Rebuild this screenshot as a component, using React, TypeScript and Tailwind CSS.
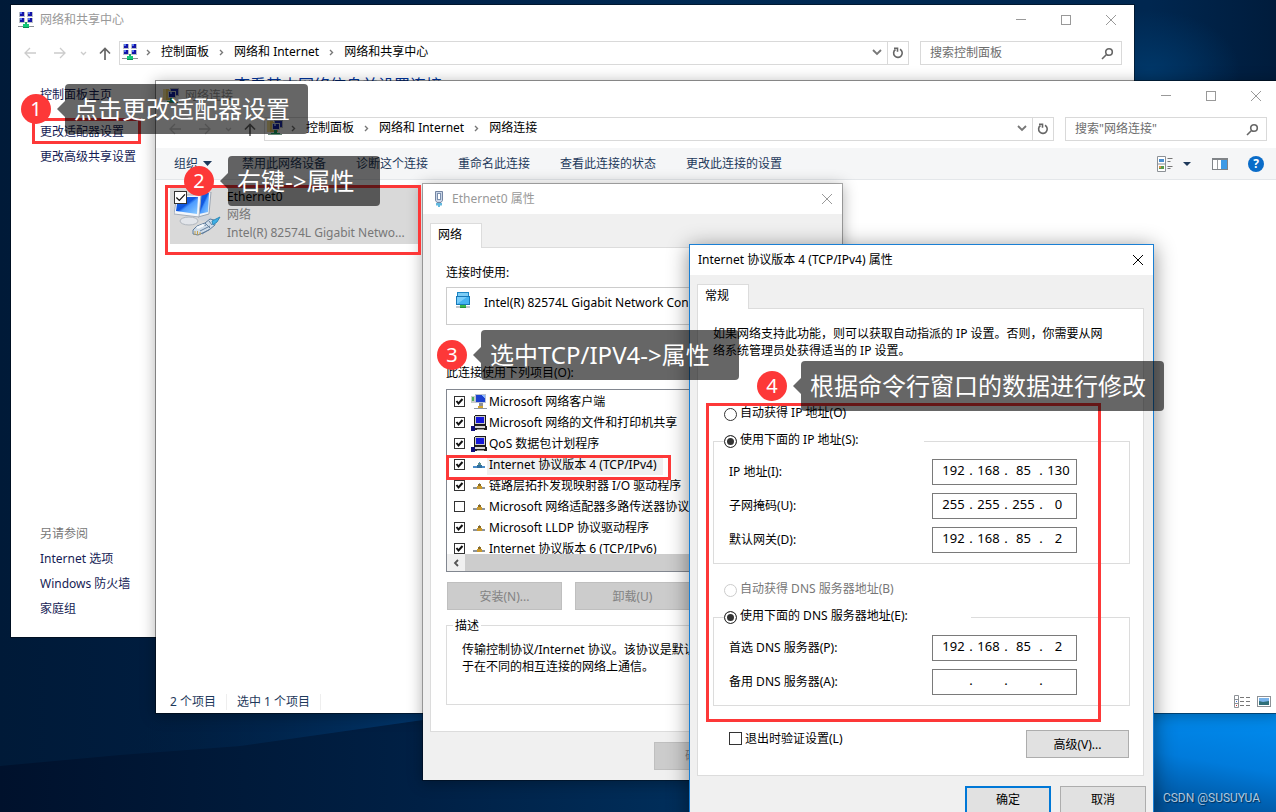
import type { ReactNode } from "react";
import clsx from "clsx";

const sidebarLinks = ["更改适配器设置", "更改高级共享设置"];
const seeAlsoLinks = ["Internet 选项", "Windows 防火墙", "家庭组"];
const toolbarActions = ["禁用此网络设备", "诊断这个连接", "重命名此连接", "查看此连接的状态", "更改此连接的设置"];

type ItemIcon = "client" | "service" | "protocol";

const connectionItems: { label: string; icon: ItemIcon; checked: boolean; selected?: boolean }[] = [
  { label: "Microsoft 网络客户端", icon: "client", checked: true },
  { label: "Microsoft 网络的文件和打印机共享", icon: "service", checked: true },
  { label: "QoS 数据包计划程序", icon: "service", checked: true },
  { label: "Internet 协议版本 4 (TCP/IPv4)", icon: "protocol", checked: true, selected: true },
  { label: "链路层拓扑发现映射器 I/O 驱动程序", icon: "protocol", checked: true },
  { label: "Microsoft 网络适配器多路传送器协议", icon: "protocol", checked: false },
  { label: "Microsoft LLDP 协议驱动程序", icon: "protocol", checked: true },
  { label: "Internet 协议版本 6 (TCP/IPv6)", icon: "protocol", checked: true },
];

const Wallpaper = () => (
  <svg className="absolute inset-0 h-full w-full" viewBox="0 0 1276 812" preserveAspectRatio="none" aria-hidden="true">
    <defs>
      <linearGradient id="sky" x1="0" y1="0" x2="1" y2="0">
        <stop offset="0" stopColor="#001a38" />
        <stop offset="0.3" stopColor="#002148" />
        <stop offset="0.55" stopColor="#002a54" />
        <stop offset="0.9" stopColor="#002750" />
        <stop offset="1" stopColor="#001c3c" />
      </linearGradient>
      <linearGradient id="floor" x1="0" y1="0" x2="1" y2="0">
        <stop offset="0" stopColor="#00112c" />
        <stop offset="0.35" stopColor="#001a3a" />
        <stop offset="0.6" stopColor="#002045" />
        <stop offset="1" stopColor="#002f5c" />
      </linearGradient>
      <linearGradient id="beam" x1="0" y1="0" x2="1" y2="0">
        <stop offset="0" stopColor="#001d3c" stopOpacity="0" />
        <stop offset="1" stopColor="#00386f" />
      </linearGradient>
      <linearGradient id="glow" x1="0.7" y1="0" x2="0.5" y2="1">
        <stop offset="0" stopColor="#0092f6" />
        <stop offset="0.6" stopColor="#007bdb" />
        <stop offset="1" stopColor="#00539c" />
      </linearGradient>
      <radialGradient id="spot" cx="0.5" cy="0.5" r="0.5">
        <stop offset="0" stopColor="#003768" />
        <stop offset="1" stopColor="#003768" stopOpacity="0" />
      </radialGradient>
    </defs>
    <rect width="1276" height="812" fill="url(#sky)" />
    <polygon points="0,766 120,755 240,746 430,719 700,680 700,812 0,812" fill="url(#floor)" />
    <polygon points="160,713 430,713 430,719 240,746 120,755" fill="url(#beam)" />
    <ellipse cx="1150" cy="70" rx="90" ry="60" fill="url(#spot)" />
    <rect x="1140" y="690" width="136" height="122" fill="url(#glow)" />
  </svg>
);

const NetworkCenterIcon = () => (
  <svg width="16" height="16" viewBox="0 0 16 16" shapeRendering="crispEdges" aria-hidden="true">
    {[
      [1, 0],
      [9, 0],
      [1, 6],
      [9, 6],
    ].map(([x, y]) => (
      <g key={`${x}-${y}`}>
        <rect x={x} y={y} width="6" height="5" fill="#b9bec8" />
        <rect x={x + 1} y={y} width="4" height="4" fill="#1414a8" />
        <rect x={x + 1} y={y} width="2" height="2" fill="#5a78f0" />
      </g>
    ))}
    <rect x="7" y="10" width="2" height="3" fill="#1fa968" />
    <rect x="5" y="12" width="6" height="3" fill="#14c878" />
    <rect x="0" y="14" width="5" height="1" fill="#8a9096" />
    <rect x="11" y="14" width="5" height="1" fill="#8a9096" />
    <rect x="5" y="15" width="6" height="1" fill="#0a8a52" />
  </svg>
);

const ConnectionsFolderIcon = () => (
  <svg width="16" height="16" viewBox="0 0 16 16" shapeRendering="crispEdges" aria-hidden="true">
    <path d="M0 1h5l1 1h5v10H0z" fill="#e8c860" />
    <path d="M0 1h3v11H0z" fill="#f8e49a" />
    <rect x="7" y="0" width="9" height="8" fill="#b4bac4" />
    <rect x="8" y="1" width="7" height="6" fill="#1c2cb0" />
    <rect x="5" y="3" width="8" height="7" fill="#d0d5dc" />
    <rect x="6" y="4" width="6" height="5" fill="#1020a8" />
    <rect x="7" y="4" width="2" height="2" fill="#7a96f4" />
    <rect x="7" y="10" width="3" height="3" fill="#1fa968" />
    <rect x="4" y="13" width="9" height="2" fill="#14b870" />
    <rect x="1" y="14" width="14" height="1" fill="#6a8878" />
  </svg>
);

const PlugIcon = () => (
  <svg width="10" height="16" viewBox="0 0 10 16" aria-hidden="true">
    <path d="M1.500 .5h7v9l-1.500 2H3l-1.500-2z" fill="#c9d5e6" stroke="#7485a2" />
    <rect x="3.500" y="2.500" width="3" height="6" fill="#fff" stroke="#7b8fae" />
    <path d="M3 12v2.500M5 12v4M7 12v2.500" stroke="#1f9bd1" strokeWidth="1.400" />
  </svg>
);

const AdapterIcon = () => (
  <svg width="16" height="16" viewBox="0 0 16 16" aria-hidden="true">
    <rect x="2.500" y=".5" width="11" height="5" fill="#7ccdf6" stroke="#1c86c4" />
    <rect x="1.500" y="4.500" width="13" height="8" fill="#45b4f2" stroke="#1779b8" />
    <path d="M2 12V5h10z" fill="#79cdfa" />
    <path d="M5 13h6v2H5z" fill="#38b54a" />
    <path d="M1 15h4M11 15h4" stroke="#c3c8cc" strokeWidth="2" />
    <path d="M5 15.500h6" stroke="#27933a" />
  </svg>
);

const EthernetIcon = () => (
  <svg className="mt-1 ml-1" width="48" height="46" viewBox="0 0 48 46" aria-hidden="true">
    <defs>
      <linearGradient id="screen" x1="0" y1="0" x2="1" y2="1">
        <stop offset="0" stopColor="#1b62e2" />
        <stop offset="0.45" stopColor="#0f56df" />
        <stop offset="0.55" stopColor="#4c9bff" />
        <stop offset="1" stopColor="#8fcdff" />
      </linearGradient>
    </defs>
    <ellipse cx="31" cy="26" rx="7" ry="3" fill="#cfd4db" />
    <path d="M19 0h18l-2 22-11 3z" fill="#edf2f8" stroke="#9ba5b2" />
    <path d="M25 1h10l-1 19-9 2z" fill="url(#screen)" />
    <path d="M3 3h24l-2 22L0 22z" fill="#f3f6fa" stroke="#a5aebb" />
    <path d="M4 5h20l-1 17L2 19z" fill="url(#screen)" />
    <path d="M10 25h7l1 4h-8z" fill="#b0b6be" />
    <ellipse cx="15" cy="29" rx="9" ry="4" fill="#e2e5ea" stroke="#b0b6be" />
    <path d="M19 38l4-4 8-3 5-4 4 1 1 5-6 5-11 5-5-1z" fill="#cfdce9" stroke="#5f7c9c" />
    <path d="M24 36l8-3M26 39l10-5M28 42l8-5M31 31l5 5M35 29l3 4" stroke="#64819f" />
    <path d="M22 35l7-3 2 2-7 3z" fill="#f4f8fc" />
    <path d="M38 29l8-4-3 5-4 3z" fill="#3dafe6" stroke="#2f8ab8" />
    <path d="M21 39v4M23.500 39v4M26 40v3" stroke="#c9a24a" />
  </svg>
);

const ItemGlyph = ({ icon, active }: { icon: ItemIcon; active?: boolean }) => {
  if (icon === "client") {
    return (
      <svg width="16" height="16" viewBox="0 0 16 16" shapeRendering="crispEdges" aria-hidden="true">
        <rect x="0" y="2" width="4" height="7" fill="#c9cec8" />
        <rect x="1" y="3" width="2" height="4" fill="#4fae5c" />
        <rect x="4" y="0" width="11" height="9" fill="#b9c2d0" />
        <rect x="5" y="1" width="9" height="7" fill="#1c40cf" />
        <path d="M10 1h4v4z" fill="#8ab6ff" />
        <rect x="8" y="9" width="4" height="3" fill="#8b8f99" />
        <rect x="7" y="12" width="5" height="3" fill="#d2a52e" />
        <rect x="3" y="14" width="13" height="1" fill="#8d96a0" />
      </svg>
    );
  }
  if (icon === "service") {
    return (
      <svg width="16" height="16" viewBox="0 0 16 16" shapeRendering="crispEdges" aria-hidden="true">
        <path d="M4 0h10l1 1v9H3V1z" fill="#1a1a1a" />
        <rect x="4" y="1" width="10" height="8" fill="#c8c8c8" />
        <rect x="5" y="2" width="8" height="6" fill="#1518d8" />
        <path d="M3 10h11l2 2v3H4z" fill="#222" />
        <rect x="4" y="11" width="10" height="2" fill="#d8d8d8" />
        <rect x="6" y="14" width="7" height="1" fill="#9a9a9a" />
        <path d="M0 11h4v5H0z" fill="#10107c" />
      </svg>
    );
  }
  const base = active ? "#4a8cc8" : "#8d9399";
  return (
    <svg width="16" height="16" viewBox="0 0 16 16" shapeRendering="crispEdges" aria-hidden="true">
      <rect x="2" y="9" width="12" height="2" fill={base} />
      <rect x="6" y="8" width="5" height="3" fill={active ? "#2f6f9f" : "#c9982a"} />
      <rect x="7" y="6" width="3" height="2" fill={active ? "#5f8f8a" : "#8a6b22"} />
      <rect x="8" y="5" width="1" height="1" fill={base} />
    </svg>
  );
};

const CloseGlyph = () => (
  <svg width="12" height="12" viewBox="0 0 12 12" fill="none" stroke="currentColor" aria-hidden="true">
    <path d="M1 1l10 10M11 1L1 11" />
  </svg>
);

const Crumb = () => (
  <svg className="mr-2.5 ml-2 shrink-0" width="5" height="7" viewBox="0 0 5 7" fill="none" stroke="#777" strokeWidth="1.400" aria-hidden="true">
    <path d="M1 1l2.500 2.500L1 6" />
  </svg>
);

const CaptionButtons = () => (
  <div className="ml-auto flex h-full text-[#999]">
    <button type="button" aria-label="最小化" className="grid w-[45px] place-items-center">
      <span className="h-px w-2.5 bg-current" />
    </button>
    <button type="button" aria-label="最大化" className="grid w-[45px] place-items-center">
      <span className="size-2.5 border border-current" />
    </button>
    <button type="button" aria-label="关闭" className="grid w-[45px] place-items-center">
      <CloseGlyph />
    </button>
  </div>
);

type ExplorerWindowProps = {
  title: string;
  icon: ReactNode;
  path: string[];
  placeholder: string;
  className: string;
  children: ReactNode;
};

const ExplorerWindow = ({ title, icon, path, placeholder, className, children }: ExplorerWindowProps) => (
  <section className={clsx("absolute flex h-[634px] w-[1125px] flex-col border bg-white bg-clip-padding", className)}>
    <header className="flex h-[30px] shrink-0 items-center gap-1.5 pr-px pb-px pl-[7px] text-[#999]">
      {icon}
      <h1>{title}</h1>
      <CaptionButtons />
    </header>
    <div className="mt-1.5 flex h-6 shrink-0 items-stretch pr-3 pl-1">
      <button type="button" aria-label="后退" className="grid w-[30px] place-items-center text-[#ccc]">
        <svg width="12" height="12" viewBox="0 0 12 12" fill="none" stroke="currentColor" strokeWidth="1.300">
          <path d="M12 6H1M6 1L1 6l5 5" />
        </svg>
      </button>
      <button type="button" aria-label="前进" className="grid w-[30px] place-items-center text-[#ccc]">
        <svg width="12" height="12" viewBox="0 0 12 12" fill="none" stroke="currentColor" strokeWidth="1.300">
          <path d="M0 6h11M6 1l5 5-5 5" />
        </svg>
      </button>
      <button type="button" aria-label="最近浏览的位置" className="grid w-4 place-items-center text-[#ccc]">
        <svg width="7" height="5" viewBox="0 0 7 5" fill="none" stroke="currentColor" strokeWidth="1.300">
          <path d="M1 1l2.500 2.500L6 1" />
        </svg>
      </button>
      <button type="button" aria-label="向上" className="grid w-7 place-items-center text-[#666]">
        <svg width="12" height="13" viewBox="0 0 12 13" fill="none" stroke="currentColor" strokeWidth="1.700">
          <path d="M6 13V1.500M1 6.500l5-5 5 5" />
        </svg>
      </button>
      <nav className="flex flex-1 items-center border border-[#d9d9d9] pb-0.5 pl-0.5">
        {icon}
        {path.map((part) => (
          <span key={part} className="flex items-center">
            <Crumb />
            <a href="#" className="pr-0.5">
              {part}
            </a>
          </span>
        ))}
        <button type="button" aria-label="展开" className="ml-auto grid h-full w-5 place-items-center text-[#777]">
          <svg width="10" height="7" viewBox="0 0 10 7" fill="none" stroke="currentColor" strokeWidth="1.800">
            <path d="M1 1l4 4 4-4" />
          </svg>
        </button>
      </nav>
      <button type="button" aria-label="刷新" className="grid w-[21px] place-items-center border border-l-0 border-[#d9d9d9] text-[#666]">
        <svg width="12" height="12" viewBox="0 0 12 12" fill="none" stroke="currentColor" strokeWidth="1.600">
          <path d="M8 2.300A4.300 4.300 0 1 1 3.500 2.500" />
          <path d="M2 1.200h3.500v3.500" />
        </svg>
      </button>
      <label className="ml-[11px] flex w-[202px] items-center border border-[#d9d9d9] pr-[7px] pl-[9px]">
        <input
          type="text"
          aria-label={placeholder}
          placeholder={placeholder}
          className="min-w-0 flex-1 outline-none placeholder:text-[#6d6d6d]"
        />
        <svg width="13" height="13" viewBox="0 0 13 13" fill="none" stroke="#666" strokeWidth="1.600" aria-hidden="true">
          <circle cx="8" cy="5" r="3.300" />
          <path d="M5.500 7.500L1 12" />
        </svg>
      </label>
    </div>
    {children}
  </section>
);

type DialogProps = {
  title: string;
  tab: string;
  icon?: ReactNode;
  active?: boolean;
  className: string;
  children: ReactNode;
};

const PropertyDialog = ({ title, tab, icon, active, className, children }: DialogProps) => (
  <section className={clsx("absolute border bg-[#f0f0f0] bg-clip-padding text-black", className)}>
    <header className={clsx("flex h-[30px] items-center bg-white pl-2", active ? "text-black" : "text-[#999]")}>
      {icon}
      <h2>{title}</h2>
      <button type="button" aria-label="关闭" className="ml-auto grid h-full w-[30px] place-items-center">
        <CloseGlyph />
      </button>
    </header>
    <div className="px-[7px] pt-[9px] pb-2.5">
      <button
        type="button"
        role="tab"
        aria-selected="true"
        className="relative -mb-px block h-[25px] w-[52px] border border-b-0 border-[#dcdcdc] bg-white pb-0.5 pl-[7px] text-left"
      >
        {tab}
      </button>
      {children}
    </div>
  </section>
);

const Check = ({ checked, label, large }: { checked: boolean; label: string; large?: boolean }) => (
  <span className={clsx("relative grid shrink-0", large ? "size-[13px]" : "size-[11px]")}>
    <input
      type="checkbox"
      defaultChecked={checked}
      aria-label={label}
      className="peer size-full appearance-none border border-[#333] bg-white"
    />
    <svg
      className="pointer-events-none absolute inset-0 hidden size-full peer-checked:block"
      viewBox="0 0 11 11"
      fill="none"
      stroke="#111"
      strokeWidth={large ? 1 : 2}
      aria-hidden="true"
    >
      <path d={large ? "M2 5.500l2.500 2.500L9.300 2.800" : "M2.500 5l2 2.500L8.500 3"} />
    </svg>
  </span>
);

const Radio = ({ name, label, checked, disabled }: { name: string; label: string; checked?: boolean; disabled?: boolean }) => (
  <label className={clsx("flex h-[18px] items-center gap-[3px]", disabled && "text-[#777]")}>
    <input
      type="radio"
      name={name}
      defaultChecked={checked}
      disabled={disabled}
      className="size-[13px] shrink-0 appearance-none rounded-full border border-[#333] bg-white checked:bg-[#333] checked:shadow-[inset_0_0_0_2px_white] disabled:border-[#ccc]"
    />
    <span className="pb-[3px]">{label}</span>
  </label>
);

const AddressField = ({ id, label, octets }: { id: string; label: string; octets: string[] }) => (
  <div className="flex h-[26px] items-center justify-between">
    <label htmlFor={id} className="pb-0.5">
      {label}
    </label>
    <div className="flex h-full w-[145px] items-center border border-[#7a7a7a] bg-white pb-[3px] pl-[5px] text-[13px]">
      {octets.map((octet, i) => (
        <span key={i} className="flex items-center">
          {i > 0 && <span className="w-1 text-center">.</span>}
          <input
            id={i === 0 ? id : undefined}
            aria-label={i === 0 ? undefined : `${label} ${i + 1}`}
            type="text"
            defaultValue={octet}
            className="w-[31px] text-center outline-none"
          />
        </span>
      ))}
    </div>
  </div>
);

const DialogButton = ({ children, className }: { children: ReactNode; className: string }) => (
  <button type="button" className={clsx("h-7 border", className)}>
    {children}
  </button>
);

const EthernetDialog = () => (
  <PropertyDialog
    title="Ethernet0 属性"
    tab="网络"
    icon={
      <span className="mr-2 ml-[3px]">
        <PlugIcon />
      </span>
    }
    className="top-[183px] left-[422px] w-[421px] border-black/30 shadow-[0_2px_14px_rgba(0,0,0,0.3)]"
  >
    <div className="mr-0.5 border border-[#dcdcdc] bg-white pt-4 pr-3.5 pb-[26px] pl-[15px] leading-[17px]">
      <p>连接时使用:</p>
      <div className="mt-1.5 flex h-[38px] gap-3 border border-[#ccc] pt-1 pl-2">
        <AdapterIcon />
        <span className="pt-0.5 pl-px whitespace-nowrap">Intel(R) 82574L Gigabit Network Con</span>
      </div>
      <p className="mt-[39px]">此连接使用下列项目(O):</p>
      <div className="mt-2 border border-[#828790]">
        <ul className="h-[164px] overflow-hidden pt-px">
          {connectionItems.map((item) => (
            <li key={item.label} className="flex h-[21px] items-center pl-[7px] whitespace-nowrap">
              <Check checked={item.checked} label={item.label} />
              <span className="ml-1.5">
                <ItemGlyph icon={item.icon} active={item.selected} />
              </span>
              <span className={clsx("px-0.5 leading-5", item.selected && "bg-[#f0f0f0] pr-1.5")}>{item.label}</span>
            </li>
          ))}
        </ul>
        <div className="flex h-[17px] bg-[#cdcdcd]">
          <button type="button" aria-label="向左滚动" className="grid w-[18px] place-items-center bg-[#f0f0f0] text-[#555]">
            <svg width="6" height="8" viewBox="0 0 6 8" fill="none" stroke="currentColor" strokeWidth="1.800">
              <path d="M5 1L2 4l3 3" />
            </svg>
          </button>
        </div>
      </div>
      <div className="mt-2.5 flex gap-[13px] pl-px">
        <DialogButton className="w-[115px] border-[#bfbfbf] bg-[#ccc] text-[#838383]">安装(N)...</DialogButton>
        <DialogButton className="w-[115px] border-[#bfbfbf] bg-[#ccc] text-[#838383]">卸载(U)</DialogButton>
      </div>
      <fieldset className="mt-[7px] border border-[#dcdcdc] px-1.5 pb-[29px]">
        <legend className="px-0.5">描述</legend>
        <p className="pt-[7px] pl-[9px] whitespace-nowrap">
          传输控制协议/Internet 协议。该协议是默认
          <br />
          于在不同的相互连接的网络上通信。
        </p>
      </fieldset>
    </div>
    <div className="mt-2.5 flex justify-end pr-[95px]">
      <DialogButton className="w-[86px] border-[#bfbfbf] bg-[#ccc] text-[#838383]">确定</DialogButton>
    </div>
  </PropertyDialog>
);

const Ipv4Dialog = () => (
  <PropertyDialog
    title="Internet 协议版本 4 (TCP/IPv4) 属性"
    tab="常规"
    active
    className="top-[244px] left-[689px] w-[465px] border-[#1a7fd4] shadow-[0_3px_20px_rgba(0,0,0,0.45)]"
  >
    <div className="mr-0.5 border border-[#dcdcdc] bg-white pt-4 pr-[13px] pb-[17px] pl-[15px] leading-[17px]">
      <p className="pr-5">
        如果网络支持此功能，则可以获取自动指派的 IP 设置。否则，你需要从网络系统管理员处获得适当的 IP 设置。
      </p>
      <div className="mt-[46px] pl-[11px]">
        <Radio name="ip" label="自动获得 IP 地址(O)" />
      </div>
      <fieldset className="mt-[9px] border border-[#dcdcdc] px-2.5 pb-2.5">
        <legend className="w-[200px]">
          <Radio name="ip" label="使用下面的 IP 地址(S):" checked />
        </legend>
        <div className="flex flex-col gap-2 pt-[9px] pr-[42px] pl-[5px]">
          <AddressField id="ip-address" label="IP 地址(I):" octets={["192", "168", "85", "130"]} />
          <AddressField id="subnet-mask" label="子网掩码(U):" octets={["255", "255", "255", "0"]} />
          <AddressField id="gateway" label="默认网关(D):" octets={["192", "168", "85", "2"]} />
        </div>
      </fieldset>
      <div className="mt-[17px] pl-[11px]">
        <Radio name="dns" label="自动获得 DNS 服务器地址(B)" disabled />
      </div>
      <fieldset className="mt-[9px] border border-[#dcdcdc] px-2.5 pb-2.5">
        <legend className="w-[247px]">
          <Radio name="dns" label="使用下面的 DNS 服务器地址(E):" checked />
        </legend>
        <div className="flex flex-col gap-2 pt-[9px] pr-[42px] pl-[5px]">
          <AddressField id="dns-primary" label="首选 DNS 服务器(P):" octets={["192", "168", "85", "2"]} />
          <AddressField id="dns-secondary" label="备用 DNS 服务器(A):" octets={["", "", "", ""]} />
        </div>
      </fieldset>
      <div className="mt-6 flex items-start justify-between pr-px pl-4">
        <label className="flex h-4 items-center gap-[3px]">
          <Check checked={false} label="退出时验证设置(L)" large />
          退出时验证设置(L)
        </label>
        <DialogButton className="w-[103px] border-[#adadad] bg-[#e1e1e1]">高级(V)...</DialogButton>
      </div>
    </div>
    <div className="mt-2.5 flex justify-end gap-[9px]">
      <DialogButton className="w-[86px] border-2 border-[#0078d7] bg-[#e1e1e1]">确定</DialogButton>
      <DialogButton className="w-[86px] border-[#adadad] bg-[#e1e1e1]">取消</DialogButton>
    </div>
  </PropertyDialog>
);

const Callout = ({ step, text, className, bubble }: { step: number; text: string; className: string; bubble: string }) => (
  <div className={clsx("absolute flex items-center whitespace-nowrap text-white", className)}>
    <span className="grid size-[30px] place-items-center rounded-full bg-[#fd3838] text-xl leading-none">{step}</span>
    <svg className="ml-1.5" width="8" height="16" viewBox="0 0 8 16" fill="#000" fillOpacity="0.6" aria-hidden="true">
      <path d="M8 0v16L0 8z" />
    </svg>
    <span className={clsx("h-[50px] rounded bg-black/60 pr-[17px] pl-[9px] text-2xl leading-[50px]", bubble)}>{text}</span>
  </div>
);

const Highlight = ({ className }: { className: string }) => (
  <div className={clsx("pointer-events-none absolute border-3 border-[#fd3838]", className)} />
);

export default function App() {
  return (
    <main className="relative min-h-screen overflow-hidden bg-[#001a38] font-['Noto_Sans','Noto_Sans_CJK_SC',sans-serif] text-xs text-black">
      <Wallpaper />

      <ExplorerWindow
        title="网络和共享中心"
        icon={<NetworkCenterIcon />}
        path={["控制面板", "网络和 Internet", "网络和共享中心"]}
        placeholder="搜索控制面板"
        className="top-1 left-[10px] border-black/40"
      >
        <div className="flex flex-1 gap-[50px] pl-[29px] leading-[17px]">
          <aside className="flex w-[144px] flex-col pt-[21px] pb-5 text-[#151c55]">
            <a href="#">控制面板主页</a>
            <ul className="mt-5 flex flex-col gap-2">
              {sidebarLinks.map((link) => (
                <li key={link}>
                  <a href="#">{link}</a>
                </li>
              ))}
            </ul>
            <ul className="mt-auto flex flex-col gap-2">
              <li className="text-[#777]">另请参阅</li>
              {seeAlsoLinks.map((link) => (
                <li key={link}>
                  <a href="#">{link}</a>
                </li>
              ))}
            </ul>
          </aside>
          <h2 className="pt-2.5 text-base leading-5 text-[#003399]">查看基本网络信息并设置连接</h2>
        </div>
      </ExplorerWindow>

      <ExplorerWindow
        title="网络连接"
        icon={<ConnectionsFolderIcon />}
        path={["控制面板", "网络和 Internet", "网络连接"]}
        placeholder={'搜索"网络连接"'}
        className="top-20 left-[155px] border-black/40 shadow-[0_2px_14px_rgba(0,0,0,0.3)]"
      >
        <div className="mt-[7px] flex h-8 shrink-0 items-center gap-[30px] border-b border-[#e4e7ea] bg-[#f5f6f7] pr-3 pl-[18px] text-[#1e395b]">
          <button type="button" className="flex items-center gap-[5px]">
            组织
            <svg width="9" height="5" viewBox="0 0 9 5" fill="currentColor" aria-hidden="true">
              <path d="M0 0h9L4.500 5z" />
            </svg>
          </button>
          {toolbarActions.map((action) => (
            <button key={action} type="button">
              {action}
            </button>
          ))}
          <div className="ml-auto flex items-center pr-[3px]">
            <button type="button" aria-label="更改视图" className="flex items-center gap-2.5">
              <svg width="16" height="16" viewBox="0 0 16 16" aria-hidden="true">
                <path d="M.5 .5h8v15h-8zM.5 8h8" fill="#fff" stroke="#8c9196" />
                <rect x="2" y="3" width="5" height="3" fill="#4b8fd0" />
                <rect x="2" y="10" width="5" height="3" fill="#5a9a48" />
                <rect x="2" y="10" width="2" height="2" fill="#e0904a" />
                <path d="M10.500 2.500h5M10.500 5.500h3M10.500 10.500h5M10.500 12.500h3" stroke="#777" />
              </svg>
              <svg width="8" height="4" viewBox="0 0 8 4" fill="currentColor" aria-hidden="true">
                <path d="M0 0h8L4 4z" />
              </svg>
            </button>
            <button type="button" aria-label="显示预览窗格" className="ml-[21px]">
              <svg width="16" height="12" viewBox="0 0 16 12" aria-hidden="true">
                <rect x=".5" y=".5" width="15" height="11" fill="#fff" stroke="#808488" />
                <path d="M0 1h16" stroke="#808488" strokeWidth="2" />
                <path d="M5.500 2v9" stroke="#9a9da0" />
                <rect x="9" y="2" width="6" height="9" fill="#3d9ae6" />
              </svg>
            </button>
            <button
              type="button"
              aria-label="帮助"
              className="ml-5 grid size-4 place-items-center rounded-full bg-[#0a6cc8] text-xs leading-none font-bold text-white"
            >
              ?
            </button>
          </div>
        </div>
        <div className="flex-1 px-3.5 pt-2">
          <div className="flex w-[250px] bg-[#d9d9d9] pb-0.5">
            <div className="relative w-[57px] shrink-0">
              <EthernetIcon />
              <span className="absolute top-[3px] left-1">
                <Check checked label="Ethernet0" large />
              </span>
            </div>
            <div className="min-w-0 leading-[18px] whitespace-nowrap text-[#777]">
              <p className="text-black">Ethernet0</p>
              <p>网络</p>
              <p>Intel(R) 82574L Gigabit Netwo...</p>
            </div>
          </div>
        </div>
        <footer className="flex h-6 shrink-0 items-center pt-px pr-2 pl-3.5 text-[#1e395b]">
          <span className="border-r border-[#eee] pr-2.5">2 个项目</span>
          <span className="border-r border-[#eee] px-2.5">选中 1 个项目</span>
          <button type="button" aria-label="详细信息" className="ml-auto">
            <svg width="16" height="13" viewBox="0 0 16 13" aria-hidden="true">
              <path d="M.5 .5h4v12h-4zM.5 4.500h4M.5 8.500h4" fill="#fff" stroke="#8c9196" />
              <path d="M6 2.500h4M12 2.500h4M6 6.500h4M12 6.500h4M6 10.500h4M12 10.500h4" stroke="#777" />
              <rect x="2" y="6" width="1" height="1" fill="#3d6fe6" />
              <rect x="2" y="10" width="1" height="1" fill="#d03030" />
            </svg>
          </button>
          <button type="button" aria-label="大图标" className="ml-[7px]">
            <svg width="14" height="11" viewBox="0 0 14 11" aria-hidden="true">
              <rect x=".5" y=".5" width="13" height="10" fill="#fff" stroke="#8c9196" />
              <rect x="2" y="2" width="10" height="7" fill="#79b3ea" />
              <path d="M2 5l4 1 6-1v4H2z" fill="#2f6f78" />
            </svg>
          </button>
        </footer>
      </ExplorerWindow>

      <EthernetDialog />
      <Ipv4Dialog />

      <Highlight className="top-[118px] left-8 h-[26px] w-[109px]" />
      <Highlight className="top-[185px] left-[165px] h-[70px] w-64" />
      <Highlight className="top-[455px] left-[446px] h-[25px] w-[225px]" />
      <Highlight className="top-[403px] left-[706px] h-[319px] w-[395px]" />

      <Callout step={1} text="点击更改适配器设置" className="top-[84px] left-[21px]" bubble="min-w-[243px]" />
      <Callout step={2} text="右键->属性" className="top-[156px] left-[184px]" bubble="min-w-[152px]" />
      <Callout step={3} text="选中TCP/IPV4->属性" className="top-[330px] left-[437px]" bubble="min-w-[258px]" />
      <Callout step={4} text="根据命令行窗口的数据进行修改" className="top-[361px] left-[757px]" bubble="min-w-[363px]" />

      <p className="absolute right-4 bottom-1.5 font-[Roboto,sans-serif] text-xs text-white/70 [text-shadow:1px_1px_1px_rgba(0,0,0,0.5)]">
        CSDN @SUSUYUA
      </p>
    </main>
  );
}
